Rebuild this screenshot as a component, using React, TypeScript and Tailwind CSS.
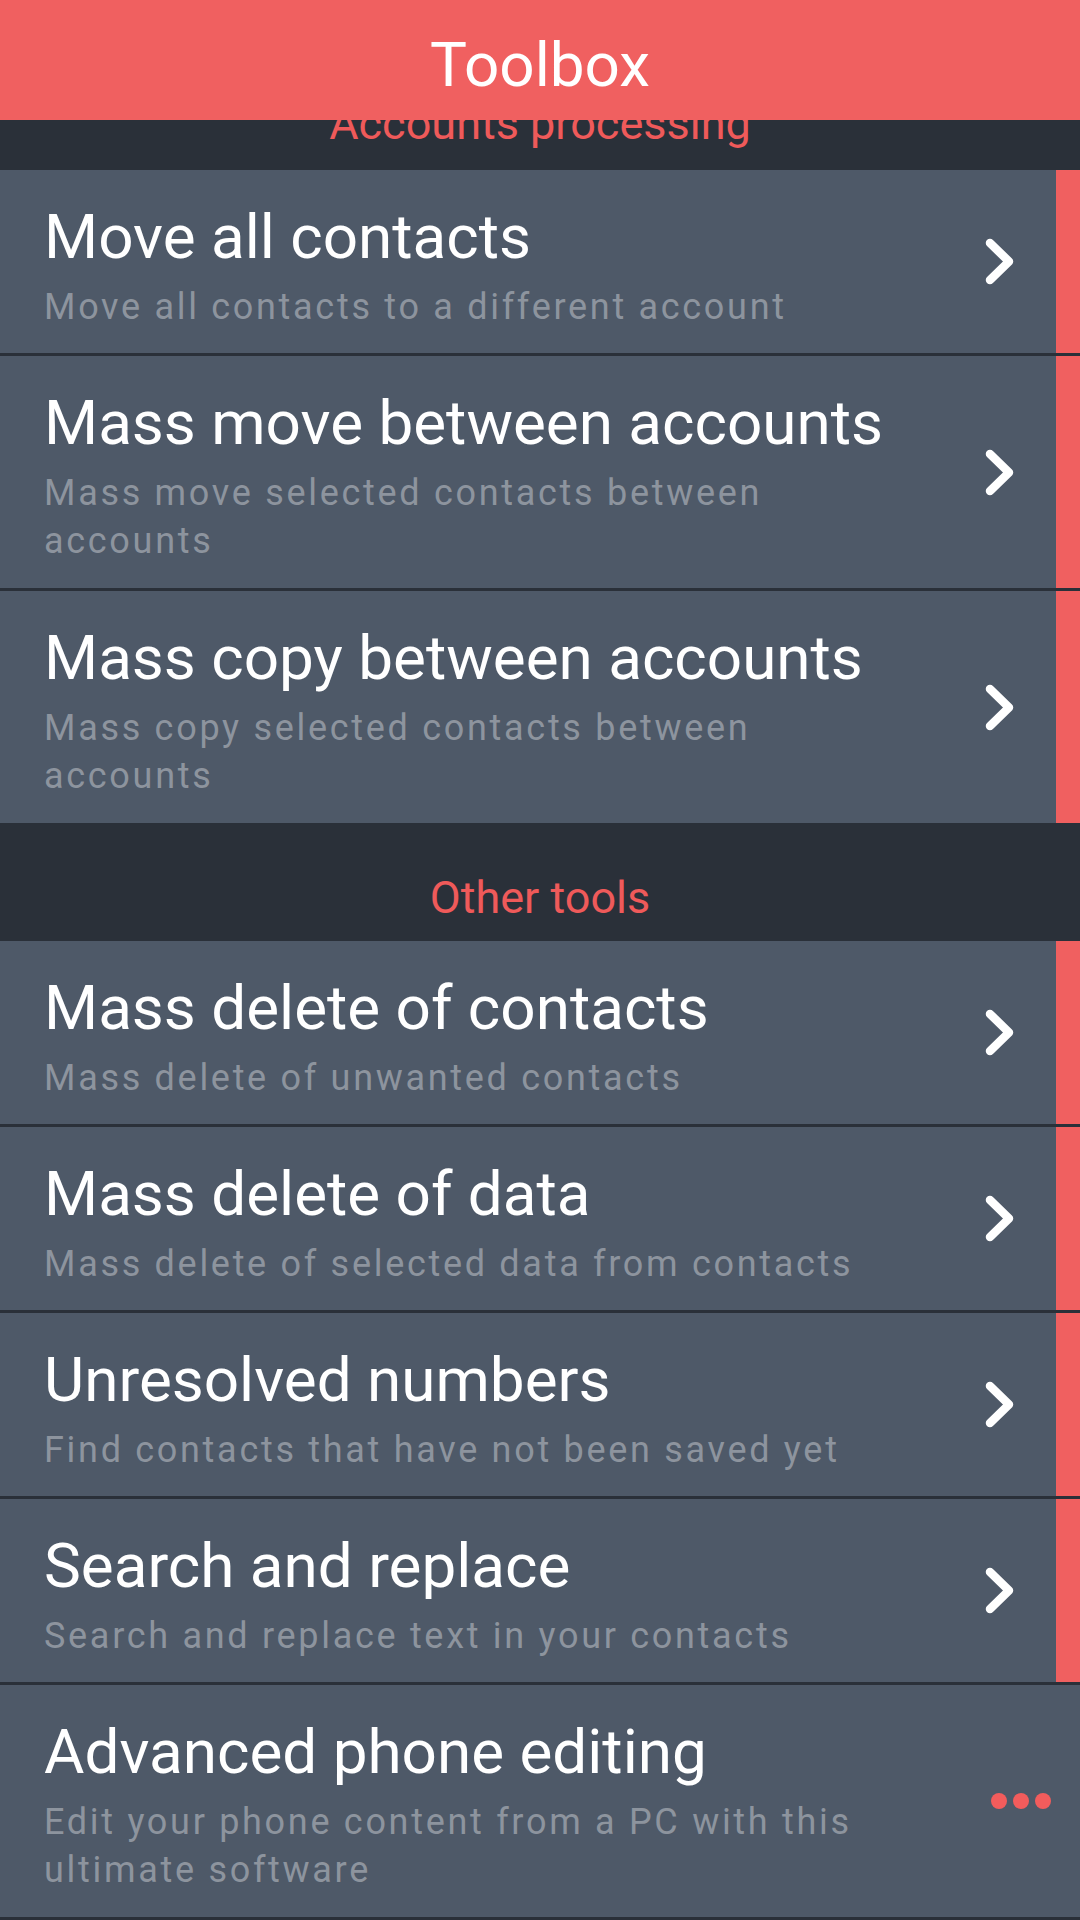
import React from "react";

type Item = { title: string; sub: string; more?: boolean; tall?: boolean };

const accounts: Item[] = [
  { title: "Move all contacts", sub: "Move all contacts to a different account" },
  { title: "Mass move between accounts", sub: "Mass move selected contacts between accounts", tall: true },
  { title: "Mass copy between accounts", sub: "Mass copy selected contacts between accounts", tall: true },
];

const others: Item[] = [
  { title: "Mass delete of contacts", sub: "Mass delete of unwanted contacts" },
  { title: "Mass delete of data", sub: "Mass delete of selected data from contacts" },
  { title: "Unresolved numbers", sub: "Find contacts that have not been saved yet" },
  { title: "Search and replace", sub: "Search and replace text in your contacts" },
  { title: "Advanced phone editing", sub: "Edit your phone content from a PC with this ultimate software", more: true, tall: true },
];

function Chevron() {
  return (
    <svg width="29" height="47" viewBox="0 0 29 47" fill="none">
      <polyline
        points="5,5 24,23.5 5,42"
        stroke="#ffffff"
        strokeWidth="8.5"
        strokeLinecap="round"
        strokeLinejoin="round"
      />
    </svg>
  );
}

function Row({ item }: { item: Item }) {
  const pad = item.more ? "pr-[90px]" : "pr-[85px]";
  const pb = item.tall ? "pb-[23px]" : "pb-[22px]";
  return (
    <div className="flex items-stretch bg-[#4e5968] border-b-[3px] border-[#2a3039]">
      <div className={`flex-1 min-w-0 pl-[44px] pt-[27px] ${pad} ${pb}`}>
        <div className="text-[62px] leading-[80px] text-white whitespace-nowrap">{item.title}</div>
        <div className="mt-[6px] text-[36px] leading-[48px] tracking-[2.7px] text-[#8d949e]">{item.sub}</div>
      </div>
      {item.more ? (
        <div className="flex items-center gap-[6px] mr-[29px]">
          <span className="block w-[16px] h-[16px] rounded-full bg-[#f25c5c]" />
          <span className="block w-[16px] h-[16px] rounded-full bg-[#f25c5c]" />
          <span className="block w-[16px] h-[16px] rounded-full bg-[#f25c5c]" />
        </div>
      ) : (
        <>
          <div className="flex items-center mr-[42px]">
            <Chevron />
          </div>
          <div className="w-[24px] bg-[#f06060]" />
        </>
      )}
    </div>
  );
}

function Section({ label, first }: { label: string; first?: boolean }) {
  return (
    <div
      className={
        first
          ? "h-[115px] bg-[#2a3039] pt-[42px] text-center text-[45px] leading-[53px] text-[#ef5a5a]"
          : "h-[115px] bg-[#2a3039] pt-[45px] text-center text-[45px] leading-[53px] text-[#ef5a5a]"
      }
    >
      {label}
    </div>
  );
}

export default function App() {
  return (
    <div className="w-[1080px] h-[1920px] overflow-hidden bg-[#2a3039]" style={{ fontFamily: "Roboto, 'Noto Sans', sans-serif" }}>
      <div className="h-[120px] pt-[9px] bg-[#f06060] text-center text-[62px] leading-[111px] text-white">
        Toolbox
      </div>
      <div className="h-[1800px] overflow-hidden">
        <div className="mt-[-65px]">
          <Section label="Accounts processing" first />
          {accounts.map((it) => (
            <Row key={it.title} item={it} />
          ))}
          <Section label="Other tools" />
          {others.map((it) => (
            <Row key={it.title} item={it} />
          ))}
        </div>
      </div>
    </div>
  );
}
